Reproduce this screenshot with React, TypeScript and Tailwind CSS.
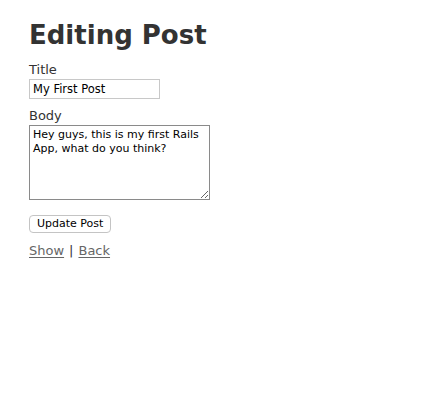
import React from "react";

export default function App() {
  return (
    <div className="min-h-[412px] bg-white pl-[29px] pt-[18px] text-[13px] leading-[18px] text-[#333]" style={{ fontFamily: '"DejaVu Sans", Verdana, sans-serif' }}>
      <h1 className="text-[26px] font-bold leading-[34px] text-[#333]">Editing Post</h1>

      <form className="mt-[10px]">
        <div>
          <label className="block text-[13px] leading-[16px]">Title</label>
          <input
            type="text"
            defaultValue="My First Post"
            className="mt-[1px] h-[20px] w-[131px] border border-[#c8c8c8] px-[3px] text-[11.5px] text-black outline-none"
          />
        </div>

        <div className="mt-[9px]">
          <label className="block text-[13px] leading-[16px]">Body</label>
          <textarea
            defaultValue="Hey guys, this is my first Rails App, what do you think?"
            className="mt-[1px] block h-[75px] w-[181px] border border-[#8a8a8a] px-[3px] py-[2px] text-[11px] leading-[14px] text-black outline-none"
          />
        </div>

        <div className="mt-[14px]">
          <button type="button" className="h-[18px] rounded-[4px] border border-[#c4c4c4] bg-white px-[7px] text-[11px] leading-[16px] text-black">
            Update Post
          </button>
        </div>
      </form>

      <p className="mt-[9px] text-[13px] leading-[18px]">
        <a href="#" className="text-[#666] underline underline-offset-2">Show</a>
        <span className="mx-[5px]">|</span>
        <a href="#" className="text-[#666] underline underline-offset-2">Back</a>
      </p>
    </div>
  );
}
